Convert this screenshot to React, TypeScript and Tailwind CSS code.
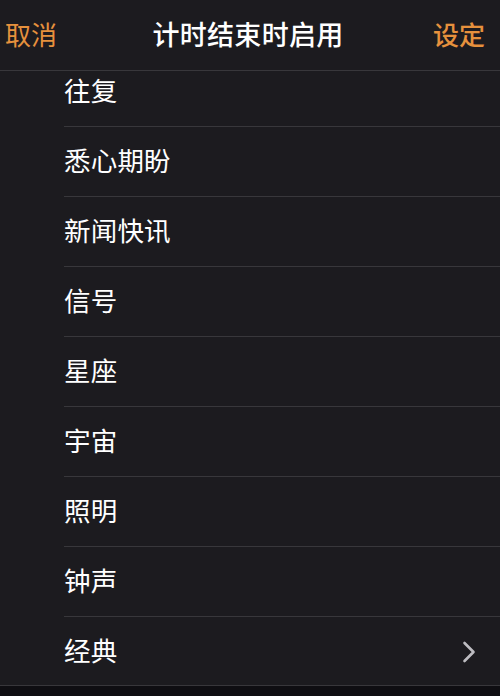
const items = ['往复', '悉心期盼', '新闻快讯', '信号', '星座', '宇宙', '照明', '钟声', '经典'];

const cjk = { fontFamily: '"Noto Sans CJK SC", "Noto Sans", sans-serif' };

export default function App() {
  return (
    <div className="w-[500px] h-[696px] overflow-hidden bg-[#0f0e12] text-white" style={cjk}>
      <header className="h-[71px] flex items-center justify-between px-[5px] pb-[3px] bg-[#1c1b1f] border-b border-[#38373b]">
        <button className="text-[26px] leading-none text-[#e6913d]">取消</button>
        <h1 className="text-[27px] font-medium leading-none tracking-[0.3px] pl-[6px]">计时结束时启用</h1>
        <button className="text-[26px] leading-none text-[#e6913d] font-medium pr-[10px]">设定</button>
      </header>
      <div className="h-[615px] overflow-hidden bg-[#1c1b1f] border-b border-[#38373b]">
        <ul className="-mt-[14px]">
          {items.map((label, i) => (
            <li key={label} className="pl-[64px]">
              <div
                className={`h-[70px] flex items-center justify-between pr-[24px] ${
                  i < items.length - 1 ? 'border-b border-[#38373b]' : ''
                }`}
              >
                <span className="text-[26.5px] leading-none tracking-[0.2px] pb-[3px]">{label}</span>
                {i === items.length - 1 && (
                  <svg width="14" height="22" viewBox="0 0 14 22">
                    <path d="M2.5 2 L11.5 11 L2.5 20" fill="none" stroke="#bdbcc1" strokeWidth="2.6" strokeLinecap="round" strokeLinejoin="round" />
                  </svg>
                )}
              </div>
            </li>
          ))}
        </ul>
      </div>
    </div>
  );
}
